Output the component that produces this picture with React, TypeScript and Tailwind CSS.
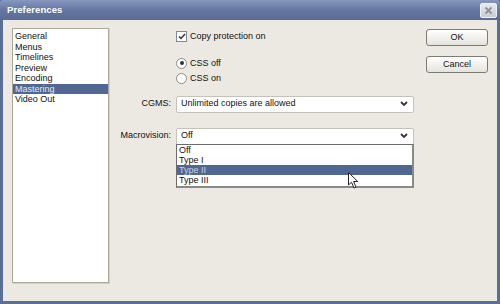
import React from 'react';

const font = { fontFamily: '"Liberation Sans", Arial, sans-serif' };

const Chevron: React.FC = () => (
  <svg width="8" height="6" viewBox="0 0 8 6" className="shrink-0">
    <polyline points="1,1 4,4 7,1" fill="none" stroke="#333" strokeWidth="1.8" />
  </svg>
);

const Select: React.FC<{ value: string; children?: React.ReactNode }> = ({ value, children }) => (
  <div className="relative w-[238px] h-[17px]">
    <div className="h-full flex items-center justify-between pl-[4px] pr-[5px] bg-white border border-[#c4c2bb] rounded-[2px] text-[9px] text-[#111]">
      <span>{value}</span>
      <Chevron />
    </div>
    {children}
  </div>
);

const Row: React.FC<{ label?: string; className?: string; children: React.ReactNode }> = ({ label, className, children }) => (
  <div className={`flex items-center ${className ?? ''}`}>
    <div className="w-[63px] pr-[1px] text-right text-[9px] text-[#111]">{label}</div>
    <div className="ml-[4px]">{children}</div>
  </div>
);

const Radio: React.FC<{ checked?: boolean; label: string }> = ({ checked, label }) => (
  <div className="flex items-center gap-[3px] text-[9px] text-[#111]">
    <div className="w-[11px] h-[11px] rounded-full border border-[#8a8a8a] bg-white flex items-center justify-center">
      {checked && <div className="w-[4px] h-[4px] rounded-full bg-[#333]" />}
    </div>
    <span>{label}</span>
  </div>
);

const Button: React.FC<{ label: string }> = ({ label }) => (
  <button className="w-[62px] h-[17px] rounded-[3px] border border-[#7b7b76] bg-gradient-to-b from-white to-[#e6e3dc] text-[9px] text-[#111] flex items-center justify-center">
    {label}
  </button>
);

const App: React.FC = () => {
  const sections = ['General', 'Menus', 'Timelines', 'Preview', 'Encoding', 'Mastering', 'Video Out'];
  const options = ['Off', 'Type I', 'Type II', 'Type III'];

  return (
    <div className="w-[500px] h-[304px] flex flex-col overflow-hidden bg-[#5b6e98]" style={font}>
      {/* title bar */}
      <div className="h-[20px] shrink-0 flex items-center justify-between pl-[7px] pr-[3px] bg-gradient-to-b from-[#8798bf] via-[#6577a1] to-[#5a6c96] rounded-t-[3px]">
        <span className="text-white font-bold text-[9.5px] tracking-[0.1px]">Preferences</span>
        <div className="w-[17px] h-[15px] rounded-[2px] border border-[#f2f2f2] bg-gradient-to-b from-[#e8e9ec] to-[#c9ccd3] flex items-center justify-center">
          <svg width="9" height="9" viewBox="0 0 9 9">
            <path d="M1.5 1.5 L7.5 7.5 M7.5 1.5 L1.5 7.5" stroke="#8c8f96" strokeWidth="1.8" />
          </svg>
        </div>
      </div>

      {/* body */}
      <div className="flex-1 mx-[3px] mb-[3px] bg-[#ece9e2] flex">
        {/* section list */}
        <div className="ml-[9px] mt-[8px] w-[97px] h-[255px] bg-white border border-[#aca899] shadow-[1px_1px_0_#d4d0c8] pt-[2px]">
          {sections.map(s => (
            <div
              key={s}
              className={`h-[10.5px] leading-[10.5px] pl-[2px] text-[9px] ${s === 'Mastering' ? 'bg-[#506891] text-[#e4e8f0]' : 'text-[#111]'}`}
            >
              {s}
            </div>
          ))}
        </div>

        {/* options */}
        <div className="flex flex-col pt-[10px]">
          <Row>
            <div className="flex items-center gap-[3px] text-[9px] text-[#111]">
              <div className="w-[11px] h-[11px] border border-[#7f8a99] bg-white flex items-center justify-center">
                <svg width="8" height="7" viewBox="0 0 8 7">
                  <polyline points="1,3.5 3,5.5 7,1" fill="none" stroke="#333" strokeWidth="1.5" />
                </svg>
              </div>
              <span>Copy protection on</span>
            </div>
          </Row>
          <Row className="mt-[13px]">
            <Radio checked label="CSS off" />
          </Row>
          <Row className="mt-[2px]">
            <Radio label="CSS on" />
          </Row>
          <Row label="CGMS:" className="mt-[10px]">
            <Select value="Unlimited copies are allowed" />
          </Row>
          <Row label="Macrovision:" className="mt-[15px]">
            <Select value="Off">
              <div className="absolute left-0 top-[16px] w-[238px] bg-white border border-[#6c6c6c] border-r-2 border-b-2 border-r-[#8a8a8a] border-b-[#8a8a8a] text-[9px] text-[#111] z-10">
                {options.map(o => (
                  <div
                    key={o}
                    className={`h-[10.3px] leading-[10.3px] pl-[2px] ${o === 'Type II' ? 'bg-[#506891] text-[#c9d0de]' : ''}`}
                  >
                    {o}
                  </div>
                ))}
              </div>
            </Select>
          </Row>
        </div>

        {/* buttons */}
        <div className="ml-[12px] mt-[9px] flex flex-col gap-[10px]">
          <Button label="OK" />
          <Button label="Cancel" />
        </div>
      </div>

      {/* mouse cursor */}
      <svg className="absolute left-[348px] top-[172px] z-20" width="11" height="17" viewBox="0 0 11 17">
        <path d="M0.5 0.5 L0.5 13 L3.5 10.2 L6 16 L8 15.2 L5.6 9.5 L9.8 9.5 Z" fill="white" stroke="#222" strokeWidth="1" />
      </svg>
    </div>
  );
};

export default App;
